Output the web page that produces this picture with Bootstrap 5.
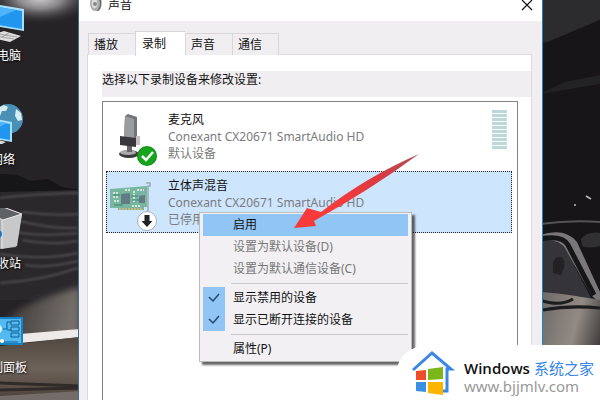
<!DOCTYPE html>
<html lang="zh-CN">
<head>
<meta charset="utf-8">
<meta name="viewport" content="width=device-width, initial-scale=1">
<title>声音</title>
<link href="https://cdn.jsdelivr.net/npm/bootstrap@5.3.0/dist/css/bootstrap.min.css" rel="stylesheet">
<style>
body{font:12px/17px "Noto Sans","Noto Sans CJK SC",sans-serif;color:#111;background:#1c1a1d}
.desktop{height:100vh}
.wallpaper{z-index:0}
.shortcuts{width:78px;z-index:1}
.shortcuts ul{width:78px;margin-left:-36px}
.shortcut{height:104px;color:#fff;line-height:16px;text-shadow:1px 1px 2px #000}
.shortcut svg{width:78px;height:48px}
.edge{width:57px}
.dialog{z-index:1;background:#f0eef1;border-left:1px solid #3f6f84;border-right:1px solid #2083bd;min-width:0}
.titlebar{height:21px;background:#fff;padding:0 9px 0 11px;line-height:10px}
.titlebar h1{font-size:12px;line-height:10px;margin-left:6px}
.titlebar button{line-height:0;margin-top:-1px}
.tabs{padding:9px 0 0 9px;height:34px}
.tabs button{width:47px;height:22px;padding:0 5px;text-align:left;border:1px solid #d8d6da;border-bottom:0;border-right:0;background:#f0eef1;color:#111}
.tabs li:last-child button{border-right:1px solid #d8d6da}
.tabs button.active{width:50px;height:25px;padding:0 6px 2px;background:#fff;margin-bottom:-1px;border-color:#d8d6da}
.panel{margin:-1px 10px 0 8px;border:1px solid #dcdadd;background:#fff;padding:16px 0 0 14px}
.hint{height:26px;background:#f0eef1}
.devices{margin:4px 13px 0 0;border:1px solid #828287;border-bottom:0;padding:3px 5px 0 3px;gap:4px}
.device{height:62px;padding:5px 4px 0 2px;border:1px solid transparent}
.device.chosen{background:#cde6fd;border:1px dotted #222}
.device svg.pic{width:52px;height:55px}
.device .info{padding-left:7px;white-space:nowrap}
.device h2{font-size:12px;line-height:17px;margin:0}
.device p{margin:0;color:#7b7b7d}
.meter{width:15px;height:40px;margin-top:-1px;background:repeating-linear-gradient(#bdd8db 0 3px,#fff 3px 4px)}
.popup{left:120px;top:212px;width:213px;padding:1px 3px;background:#f2f0f3;border:1px solid #bbb;box-shadow:3px 3px 2px #0009}
.popup button{height:22px;padding:0;color:#111;font-size:12px;line-height:22px}
.popup button:disabled{color:#777;opacity:1}
.popup button.hot{background:#91c5f6}
.popup .tick{width:22px;height:22px;margin-right:8px}
.popup .on{background:#91c5f6}
.popup hr{margin:3px 0 3px 28px;border-top:1px solid #c9c7ca;opacity:1}
.pointer{left:215px;top:152px;width:126px;height:78px}
.site{right:0;bottom:0;z-index:3;width:203px;height:55px;background:#fff;border-top-left-radius:32px 26px;padding:6px 5px 0 14px}
.site svg{width:44px;height:44px}
.site .words{padding:7px 0 0 9px}
.site .name{font:600 15px/20px "Open Sans","Noto Sans",sans-serif;color:#111}
.site .zh{font:15px/20px "Noto Sans CJK SC",sans-serif;color:#3585ea}
.site a{font:15px/16px "Noto Sans",sans-serif;color:#999;text-decoration:none}
</style>
<script src="https://cdn.jsdelivr.net/npm/bootstrap@5.3.0/dist/js/bootstrap.bundle.min.js"></script>
</head>
<body>
<div class="desktop d-flex position-relative overflow-hidden">
<svg class="wallpaper position-absolute top-0 start-0 w-100 h-100" viewBox="0 0 600 400" preserveAspectRatio="none" aria-hidden="true">
<defs>
<radialGradient id="glow"><stop stop-color="#d0ced0"/><stop offset=".4" stop-color="#888689"/><stop offset="1" stop-color="#252326" stop-opacity="0"/></radialGradient>
<linearGradient id="sand" x1="0" x2="1" y1="0" y2=".2"><stop stop-color="#232124"/><stop offset=".35" stop-color="#4a4644"/><stop offset="1" stop-color="#77716b"/></linearGradient>
<linearGradient id="hood" x1="0" x2="1" y1="0" y2=".5"><stop stop-color="#6c6867"/><stop offset=".6" stop-color="#928a83"/><stop offset="1" stop-color="#3f3c3b"/></linearGradient>
<linearGradient id="door" x1="0" x2="0" y1="0" y2="1"><stop stop-color="#504740"/><stop offset=".5" stop-color="#6d6259"/><stop offset="1" stop-color="#4b423c"/></linearGradient>
<filter id="soft"><feGaussianBlur stdDeviation="3"/></filter>
<filter id="haze"><feGaussianBlur stdDeviation="1"/></filter>
</defs>
<rect width="600" height="400" fill="#252326"/>
<ellipse cx="40" cy="-2" rx="56" ry="27" fill="url(#glow)"/>
<path d="M0 174 18 175 30 181 48 179 62 187 80 190V204H0Z" fill="#161518"/>
<path d="M0 192 80 190V300H0Z" fill="#2a282b"/>
<g fill="none" stroke="#5d5b5e" stroke-width="2" opacity=".7" filter="url(#haze)"><path d="M0 198q30-4 80-5M22 212q30 4 58 2M20 221q30 8 58 7M0 229q35 9 78 4M22 240q28 6 56 1M0 254q40 7 78-1M25 265q20 4 53-4M0 283q40-2 78-15"/></g>
<path d="M0 325C15 310 30 301 80 287V340H0Z" fill="url(#sand)" filter="url(#soft)"/>
<path d="M20 334 80 329V337L20 343Z" fill="#eeeae7"/>
<path d="M0 346 80 337V400H0Z" fill="url(#door)"/>
<path d="M0 383 80 386M0 390 80 388" stroke="#302b29" stroke-width="3"/>
<path d="M0 396 80 391V400H0Z" fill="#746c68"/>
<path d="M540 0H600V19L580 31 552 43 540 40Z" fill="#2c2b2e"/>
<path d="M540 45 600 20V400H540Z" fill="#171518"/>
<path d="M565 82 600 75V84L540 94Z" fill="#232225"/>
<path d="M586 196 591 199M574 205h2" stroke="#bbb" stroke-width="1.5"/>
<path d="M540 224Q570 220 600 222" stroke="#555356" stroke-width="2" fill="none"/>
<path d="M581 239Q588 231 600 233V246Q590 249 582 246Z" fill="#303033"/>
<path d="M540 240Q560 237 568 253L591 298H540Z" fill="#353438"/>
<path d="M553 263q2-7 8-6 5 2 3 11l-3 7-8-2Z" fill="#222124"/>
<path d="M540 235Q565 227 577 242L600 292V303L592 296 566 250Q560 238 540 240Z" fill="#79777a"/>
<path d="M540 239Q562 235 568 245L594 295" stroke="#161518" stroke-width="5" fill="none"/>
<path d="M540 292Q560 293 600 300V400H540Z" fill="url(#hood)"/>
<path d="M540 300Q560 307 573 299M543 310Q570 305 600 308" stroke="#1d1c1f" stroke-width="3" fill="none"/>
</svg>

<nav class="shortcuts flex-shrink-0 overflow-hidden" aria-label="桌面">
<ul class="list-unstyled mb-0">
<li class="shortcut d-flex flex-column align-items-center"><svg viewBox="0 0 78 48" aria-hidden="true"><path d="M5 0 60 9V31L5 22Z" fill="#a8dffc"/><path d="M5 2 58 11V29L5 20Z" fill="#2196ef"/><path d="M5 2 52 10 20 24 5 20Z" fill="#4db4fa"/><path d="M31 34 40 31 57 36 46 42 28 38Z" fill="#dedede"/><path d="M32 36 50 39M35 34 53 37M38 37 45 33" stroke="#888" stroke-width=".7"/></svg><span>此电脑</span></li>
<li class="shortcut d-flex flex-column align-items-center"><svg viewBox="0 0 78 48" aria-hidden="true"><circle cx="44" cy="15" r="15" fill="#4a8fb5"/><path d="M34 4 40 1 44 3 42 7 38 7 36 12 31 10ZM52 5 57 9 58 16 54 17 51 12Z" fill="#d8edf2"/><path d="M10 11 48 18V38L10 32Z" fill="#a8dffc"/><path d="M10 13 46 20V36L10 30Z" fill="#2196ef"/><path d="M10 13 43 19 20 31 10 30Z" fill="#4db4fa"/><path d="M34 36 42 38 38 40 30 40Z" fill="#ddd"/></svg><span>网络</span></li>
<li class="shortcut d-flex flex-column align-items-center"><svg viewBox="0 0 78 48" aria-hidden="true"><path d="M15 0 39-1 58 6 52 39 36 41 20 34Z" fill="#a9abad"/><path d="M15 0 39-1 58 6 39 12Z" fill="#5f6265"/><path d="M38 12 58 6 53 38 37 41Z" fill="#c7c8ca"/><path d="M15 0 39-1 58 6 39 12ZM38 12V40" fill="none" stroke="#e8e8e8"/><path d="M30 21q8 0 8 5t-8 5Z" fill="#1976ca"/></svg><span>回收站</span></li>
<li class="shortcut d-flex flex-column align-items-center"><svg viewBox="0 0 78 48" aria-hidden="true"><path d="M15 5H59V33H15Z" fill="#1583c8"/><path d="M17 7H57V31H17Z" fill="#52baf0"/><circle cx="33" cy="17" r="5" fill="#d9f2fd"/><g fill="none" stroke="#135f91"><path d="M39 17h4V10h4M43 18h4M30 30h24M47 9h8v4h-8ZM47 15h8v4h-8ZM47 21h8v4h-8Z"/></g><circle cx="38" cy="29" r="2" fill="#fff"/></svg><span>控制面板</span></li>
</ul>
</nav>

<main class="dialog flex-grow-1 position-relative">
<header class="titlebar d-flex align-items-start">
<svg width="12" height="12" viewBox="0 0 12 12" aria-hidden="true"><ellipse cx="7.500" cy="3" rx="4" ry="8" fill="#666"/><ellipse cx="5" cy="3.500" rx="5" ry="7.500" fill="#a9abad"/><ellipse cx="4.500" cy="3.500" rx="3" ry="5" fill="#ddd"/><circle cx="5" cy="4" r="2" fill="#888"/></svg>
<h1 class="mb-0 fw-normal me-auto">声音</h1>
<button class="btn p-0 border-0" type="button" aria-label="关闭"><svg width="12" height="12" viewBox="0 0 12 12"><path d="M1 1 11 11M11 1 1 11" stroke="#111" stroke-width="1.200"/></svg></button>
</header>
<ul class="tabs list-unstyled d-flex align-items-end mb-0" role="tablist">
<li><button type="button" role="tab">播放</button></li>
<li><button type="button" role="tab" class="active" aria-selected="true">录制</button></li>
<li><button type="button" role="tab">声音</button></li>
<li><button type="button" role="tab">通信</button></li>
</ul>
<section class="panel vh-100">
<div class="hint">选择以下录制设备来修改设置:</div>
<div class="devices d-flex flex-column h-100">
<article class="device d-flex align-items-start">
<svg class="pic flex-shrink-0" viewBox="0 0 52 55" aria-hidden="true"><ellipse cx="20" cy="43" rx="10" ry="4" fill="#3b3b3e"/><ellipse cx="19" cy="41.500" rx="8" ry="2.500" fill="#aaa"/><path d="M18 32h5v9h-5Z" fill="#666"/><path d="M16 5 19 3 28 6V30H15Z" fill="#727477"/><path d="M16 5 25 8V29L15 26Z" fill="#999b9d"/><path d="M11 25 27 27V36L11 34Z" fill="#39393c"/><path d="M27 25h4v9h-4Z" fill="#c9bdc2"/><circle cx="38" cy="45" r="10" fill="#118b17"/><circle cx="38" cy="45" r="9" fill="#16a51c"/><path d="M33 45 37 49 44 41" fill="none" stroke="#fff" stroke-width="2.500"/></svg>
<div class="info flex-grow-1"><h2 class="fw-normal">麦克风</h2><p>Conexant CX20671 SmartAudio HD</p><p>默认设备</p></div>
<div class="meter flex-shrink-0"></div>
</article>
<article class="device chosen d-flex align-items-start">
<svg class="pic flex-shrink-0" viewBox="0 0 52 55" aria-hidden="true"><path d="M1 12 38 9V30H35V33H9V31H1Z" fill="#78b6a0"/><path d="M37 6h4v3H39V34" fill="none" stroke="#9aabb2" stroke-width="1.500"/><path d="M12 17 21 16V27H12Z" fill="#637b85"/><path d="M30 19 36 18V26H30Z" fill="#637b85"/><path d="M4 16h6M4 20h5M5 24h5M16 13h6M25 14v12M28 13h7M23 29h9" stroke="#d2e6dc" stroke-width="2" stroke-dasharray="2 1"/><path d="M4 18h7M22 19h7M23 23h7M5 28h9" stroke="#3f8372"/><path d="M10 32h24" stroke="#c5b77e" stroke-width="2" stroke-dasharray="2 1"/><circle cx="38" cy="44" r="9.500" fill="#fff" stroke="#aab0b8"/><path d="M35.500 38h5v6h3L38 50 32.500 44h3Z" fill="#222"/></svg>
<div class="info"><h2 class="fw-normal">立体声混音</h2><p>Conexant CX20671 SmartAudio HD</p><p>已停用</p></div>
</article>
</div>
</section>
<div class="popup position-absolute" role="menu">
<button class="btn rounded-0 border-0 d-flex w-100 hot" type="button" role="menuitem"><span class="tick"></span>启用</button>
<button class="btn rounded-0 border-0 d-flex w-100" type="button" role="menuitem" disabled><span class="tick"></span>设置为默认设备(D)</button>
<button class="btn rounded-0 border-0 d-flex w-100" type="button" role="menuitem" disabled><span class="tick"></span>设置为默认通信设备(C)</button>
<hr>
<button class="btn rounded-0 border-0 d-flex w-100" type="button" role="menuitemcheckbox" aria-checked="true"><svg class="tick on" viewBox="0 0 22 22"><path d="M6 10 10 14 16 7" fill="none" stroke="#24476d" stroke-width="1.500"/></svg>显示禁用的设备</button>
<button class="btn rounded-0 border-0 d-flex w-100" type="button" role="menuitemcheckbox" aria-checked="true"><svg class="tick on" viewBox="0 0 22 22"><path d="M6 10 10 14 16 7" fill="none" stroke="#24476d" stroke-width="1.500"/></svg>显示已断开连接的设备</button>
<hr>
<button class="btn rounded-0 border-0 d-flex w-100" type="button" role="menuitem"><span class="tick"></span>属性(P)</button>
</div>
<svg class="pointer position-absolute" viewBox="0 0 126 78" aria-hidden="true"><defs><linearGradient id="red" x1="1" x2="0" y1="0" y2="1"><stop stop-color="#a8565a"/><stop offset=".3" stop-color="#d93a42"/><stop offset=".7" stop-color="#f83a3a"/></linearGradient></defs><path d="M125 2Q72 25 27 60L13 56 0 76 22 74 20 69Q76 38 125 2Z" fill="url(#red)" transform="translate(0 0)"/></svg>
</main>
<div class="edge flex-shrink-0"></div>

<footer class="site position-absolute d-flex">
<svg class="flex-shrink-0" viewBox="0 0 44 44" aria-hidden="true"><path d="M2 19 21 2 40 18H36V40H32" fill="none" stroke="#3b87e6" stroke-width="3"/><path d="M5 20 15 19V29H5Z" fill="#ee4d2b"/><path d="M17 18 32 16V28L17 29Z" fill="#7cb719"/><path d="M5 31H15V41L5 40Z" fill="#3a91e3"/><path d="M17 31H32V44L17 42Z" fill="#fbb500"/></svg>
<div class="words d-flex flex-column text-nowrap"><div class="d-flex gap-1"><span class="name">Windows</span><span class="zh">系统之家</span></div><a href="http://www.bjjmlv.com">www.bjjmlv.com</a></div>
</footer>
</div>
</body>
</html>
